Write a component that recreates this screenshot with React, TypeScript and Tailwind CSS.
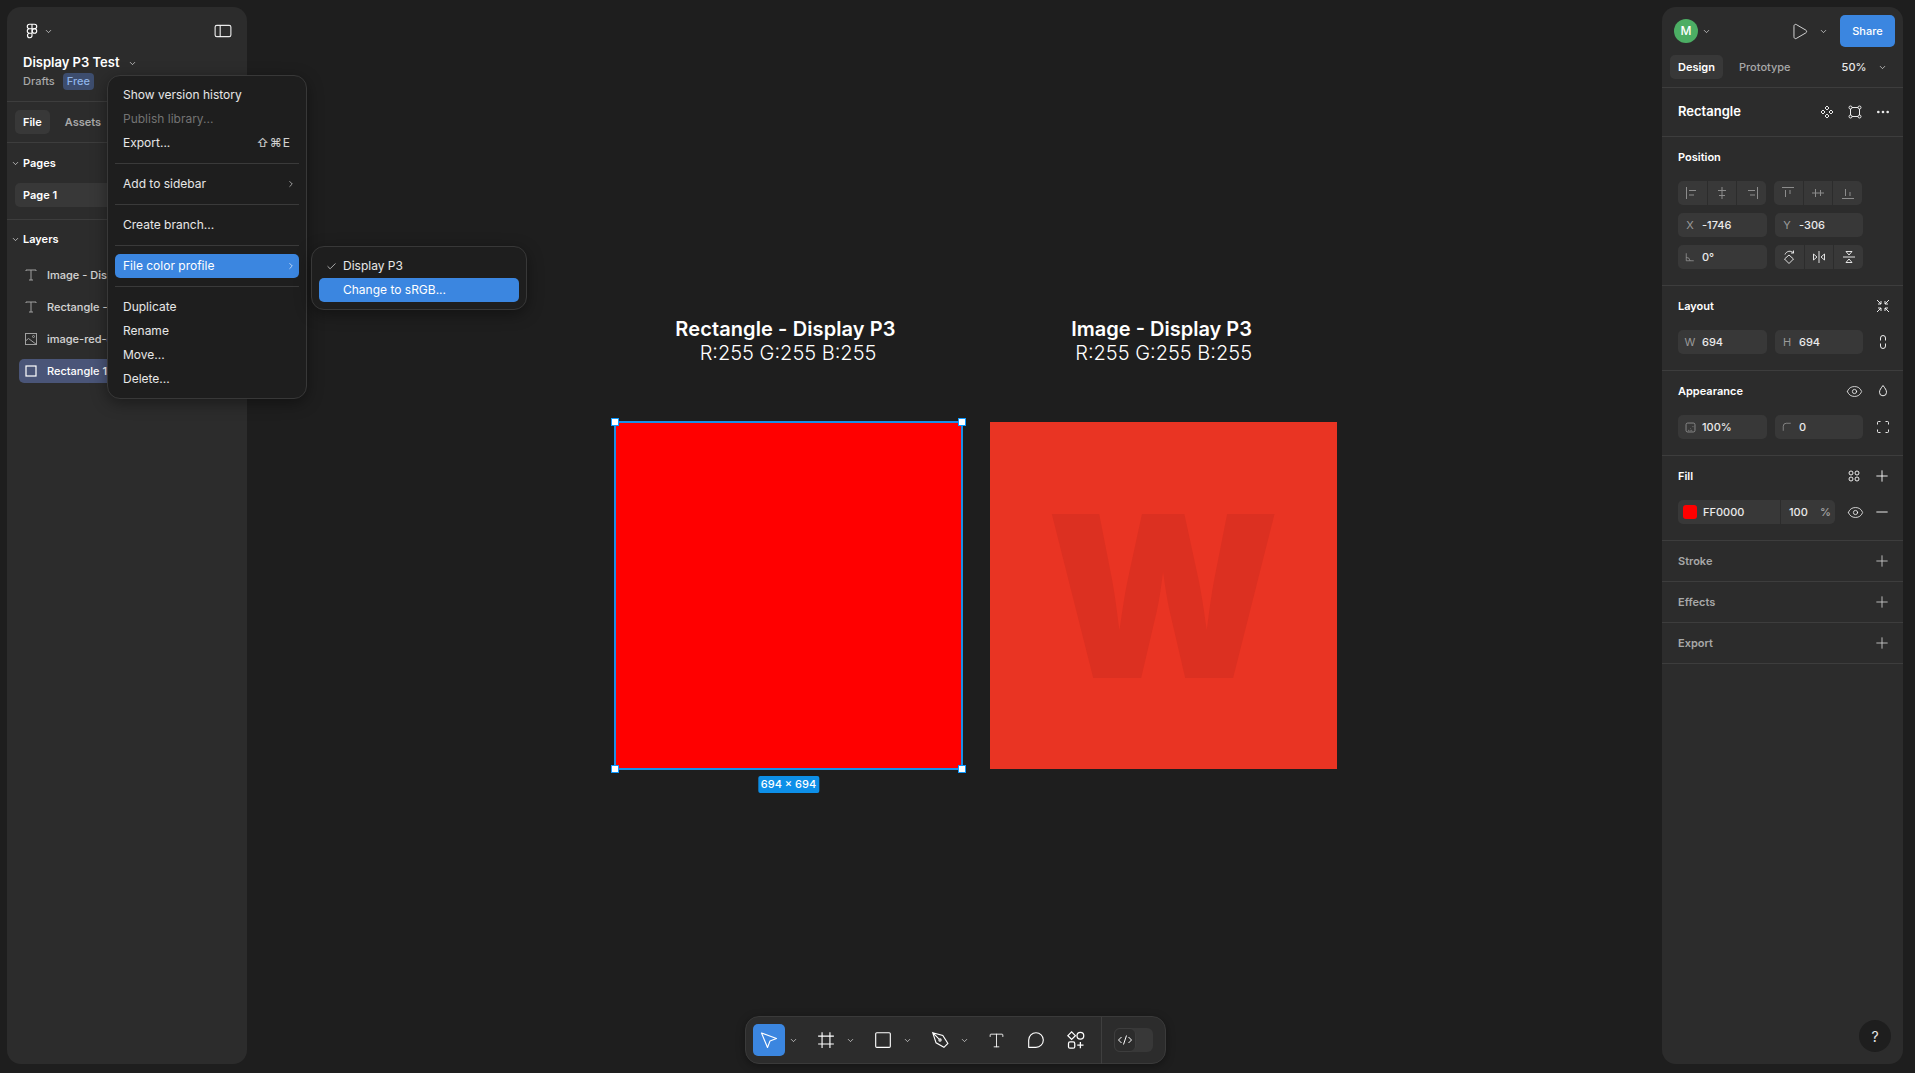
import type { ReactNode } from 'react';
import { Check, ChevronDown, ChevronRight, Ellipsis, Eye, Minus, Play, Plus, Type } from 'lucide-react';

const font = "font-['Inter','Noto_Sans',sans-serif]";

function Svg({ size = 16, children, className = '' }: { size?: number; children: ReactNode; className?: string }) {
  return (
    <svg width={size} height={size} viewBox="0 0 16 16" fill="none" stroke="currentColor" strokeWidth="1" className={`shrink-0 ${className}`}>
      {children}
    </svg>
  );
}

function Chevron({ className = 'text-white/80' }: { className?: string }) {
  return <ChevronDown size={9} strokeWidth={2} className={`shrink-0 ${className}`} />;
}

function Field({ label, value, className = 'w-[89px]' }: { label: ReactNode; value: string; className?: string }) {
  return (
    <div className={`flex h-6 shrink-0 items-center rounded-[5px] bg-[#383838] ${className}`}>
      <span className="flex w-[24px] shrink-0 items-center justify-center text-[#9a9a9a]">{label}</span>
      <span className="text-[11px] font-medium text-white/90">{value}</span>
    </div>
  );
}

function SegGroup({ icons }: { icons: ReactNode[] }) {
  return (
    <div className="flex h-6 w-[88px] shrink-0 items-center gap-px overflow-hidden rounded-[5px]">
      {icons.map((icon, i) => (
        <span key={i} className="flex h-6 flex-1 items-center justify-center bg-[#383838]">
          {icon}
        </span>
      ))}
    </div>
  );
}

function SectionTitle({ title, muted, right }: { title: string; muted?: boolean; right?: ReactNode }) {
  return (
    <div className="flex h-6 items-center justify-between">
      <span className={`text-[11px] font-semibold ${muted ? 'text-[#a8a8a8]' : 'text-white'}`}>{title}</span>
      {right}
    </div>
  );
}

function MenuItem({ label, active, disabled, right }: { label: string; active?: boolean; disabled?: boolean; right?: ReactNode }) {
  return (
    <div
      className={`flex h-6 items-center justify-between rounded-[5px] pl-2 pr-[3px] text-[12px] ${
        active ? 'bg-[#3b86e0] text-white' : disabled ? 'text-[#737373]' : 'text-white/90'
      }`}
    >
      <span>{label}</span>
      {right}
    </div>
  );
}

function MenuDivider() {
  return <div className="my-2 h-px bg-[#3a3a3a]" />;
}

function LayerRow({ icon, label, selected }: { icon: ReactNode; label: string; selected?: boolean }) {
  return (
    <div className={`flex h-6 items-center gap-2 whitespace-nowrap rounded-[5px] pl-1 ${selected ? 'bg-[#4a5578] text-white' : 'text-white/80'}`}>
      <span className={selected ? 'text-white' : 'text-[#a0a0a0]'}>{icon}</span>
      <span className="text-[11px] font-medium">{label}</span>
    </div>
  );
}

const TextIcon = (
  <Svg>
    <path d="M3 4V3h10v1M8 3v10M6 13h4" />
  </Svg>
);

function LeftPanel() {
  return (
    <aside className="flex h-full w-[240px] flex-col overflow-hidden rounded-[14px] bg-[#2c2c2c]">
      <div className="border-b border-[#3d3d3d] px-4 pb-[11px] pt-3">
        <div className="flex h-6 items-center justify-between">
          <div className="flex items-center gap-[3px] text-white">
            <Svg size={18} className="text-white">
              <path d="M8 2H5.8a2 2 0 0 0 0 4H8zM8 6H5.8a2 2 0 0 0 0 4H8zM8 10H5.8a2 2 0 1 0 2.2 2zM8 2h2.2a2 2 0 0 1 0 4H8z" />
              <circle cx="10.2" cy="8" r="2" />
            </Svg>
            <Chevron />
          </div>
          <Svg size={18} className="-mr-px text-white/90">
            <rect x="1" y="3" width="14" height="10" rx="1.5" />
            <path d="M5.5 3v10" />
          </Svg>
        </div>
        <div className="mt-2 flex h-6 items-center gap-2">
          <span className="text-[13px] font-semibold text-white">Display P3 Test</span>
          <Chevron />
        </div>
        <div className="-mt-[2px] flex h-[17px] items-center gap-2 text-[11px] font-medium">
          <span className="text-[#a8a8a8]">Drafts</span>
          <span className="rounded-[4px] bg-[#3d4d6e] px-1 text-[#8fb4e8]">Free</span>
        </div>
      </div>

      <div className="flex h-[41px] items-center gap-[15px] border-b border-[#3d3d3d] pl-2 text-[11px] font-semibold">
        <span className="flex h-6 items-center rounded-[5px] bg-[#383838] px-2 text-white">File</span>
        <span className="text-[#a8a8a8]">Assets</span>
      </div>

      <div className="border-b border-[#3d3d3d] px-2 pb-3 pt-2">
        <div className="-ml-1 flex h-6 items-center gap-[3px]">
          <Chevron />
          <span className="text-[11px] font-semibold text-white">Pages</span>
        </div>
        <div className="mt-2 flex h-6 items-center rounded-[5px] bg-[#383838] pl-2 text-[11px] font-semibold text-white">Page 1</div>
      </div>

      <div className="px-2 pt-[7px]">
        <div className="-ml-1 flex h-6 items-center gap-[3px]">
          <Chevron />
          <span className="text-[11px] font-semibold text-white">Layers</span>
        </div>
        <div className="mt-3 flex flex-col gap-2 pl-1">
          <LayerRow icon={TextIcon} label="Image - Display P3" />
          <LayerRow icon={TextIcon} label="Rectangle - Display P3" />
          <LayerRow
            label="image-red-display-p3"
            icon={
              <Svg>
                <rect x="2.5" y="2.5" width="11" height="11" />
                <circle cx="10.5" cy="5.5" r="1" />
                <path d="M2.5 10l3-2.5 8 6" />
              </Svg>
            }
          />
          <LayerRow
            selected
            label="Rectangle 1"
            icon={
              <Svg>
                <rect x="3" y="3" width="10" height="10" strokeWidth="1.2" />
              </Svg>
            }
          />
        </div>
      </div>
    </aside>
  );
}

const AlignIcons = {
  left: <path d="M2.5 2v12M5 5.5h7M5 10h5" />,
  hcenter: <path d="M8 2v12M4 5.5h8M5 10.5h6" />,
  right: <path d="M13.5 2v12M4 5.5h7M6 10h5" />,
  top: <path d="M2 2.5h12M5.5 5v7M10 5v4" />,
  vcenter: <path d="M2 8h12M5.5 4v8M10.5 5v6" />,
  bottom: <path d="M2 13.5h12M5.5 4v7M10 7v4" />,
};

const EyeIcon = <Eye size={17} strokeWidth={1.2} className="text-white/90" />;
const PlusIcon = (muted?: boolean) => <Plus size={18} strokeWidth={1.2} className={muted ? 'text-[#c8c8c8]' : 'text-white'} />;

function RightPanel() {
  const seg = (d: ReactNode) => <Svg className="text-[#8c8c8c]">{d}</Svg>;
  return (
    <aside className="relative flex h-full w-[241px] flex-col overflow-hidden rounded-[14px] bg-[#2c2c2c]">
      <div className="border-b border-[#3d3d3d] px-2 pb-2 pt-2">
        <div className="flex h-8 items-center">
          <span className="ml-[4px] flex h-6 w-6 items-center justify-center rounded-full bg-[#4cae64] text-[12px] font-medium text-white">M</span>
          <Chevron className="ml-[4px] text-white/80" />
          <Play size={19} strokeWidth={1} className="ml-[79px] text-white" />
          <Chevron className="ml-[10px] text-white/80" />
          <span className="ml-[12px] flex h-8 w-[55px] items-center justify-center rounded-[5px] bg-[#3b86e0] text-[11px] font-medium text-white">Share</span>
        </div>
        <div className="mt-2 flex h-6 items-center text-[11px] font-semibold">
          <span className="flex h-6 w-[53px] items-center justify-center rounded-[5px] bg-[#383838] text-white">Design</span>
          <span className="ml-4 font-medium text-[#a8a8a8]">Prototype</span>
          <span className="ml-[51px] font-medium text-white/90">50%</span>
          <Chevron className="ml-[12px] text-white/80" />
        </div>
      </div>

      <div className="flex h-[49px] items-center justify-between border-b border-[#3d3d3d] pl-4 pr-[12px]">
        <span className="text-[13px] font-semibold text-white">Rectangle</span>
        <div className="flex items-center gap-[12px] text-white/90">
          <Svg>
            <path d="M8 2l2 2-2 2-2-2zM8 10l2 2-2 2-2-2zM4 6l2 2-2 2-2-2zM12 6l2 2-2 2-2-2z" />
          </Svg>
          <Svg>
            <rect x="3.5" y="3.5" width="9" height="9" />
            <rect x="2" y="2" width="3" height="3" rx="1.5" fill="#2c2c2c" />
            <rect x="11" y="2" width="3" height="3" rx="1.5" fill="#2c2c2c" />
            <rect x="2" y="11" width="3" height="3" rx="1.5" fill="#2c2c2c" />
            <rect x="11" y="11" width="3" height="3" rx="1.5" fill="#2c2c2c" />
          </Svg>
          <Ellipsis size={16} strokeWidth={2} />
        </div>
      </div>

      <section className="border-b border-[#3d3d3d] px-4 pb-4 pt-2">
        <SectionTitle title="Position" />
        <div className="mt-3 flex flex-col gap-2">
          <div className="flex gap-2">
            <SegGroup icons={[seg(AlignIcons.left), seg(AlignIcons.hcenter), seg(AlignIcons.right)]} />
            <SegGroup icons={[seg(AlignIcons.top), seg(AlignIcons.vcenter), seg(AlignIcons.bottom)]} />
          </div>
          <div className="flex gap-2">
            <Field label={<span className="text-[11px]">X</span>} value="-1746" />
            <Field label={<span className="text-[11px]">Y</span>} value="-306" className="w-[88px]" />
          </div>
          <div className="flex gap-2">
            <Field
              label={
                <Svg size={12}>
                  <path d="M3 3v10h10M3 8.5a5 5 0 0 1 5 4.5" />
                </Svg>
              }
              value="0°"
            />
            <SegGroup
              icons={[
                <Svg key="r" className="text-white/85">
                  <path d="M8 6l4.5 4L8 14.5 3.5 10zM4 5.500A5 5 0 0 1 12.500 4M12.500 1.500V4H10" />
                </Svg>,
                <Svg key="f" className="text-white/85">
                  <path d="M8 2v12M2.500 5v6L6 8zM13.500 5v6L10 8z" />
                </Svg>,
                <Svg key="v" className="text-white/85">
                  <path d="M2 8h12M5 2.500h6L8 6zM5 13.500h6L8 10z" />
                </Svg>,
              ]}
            />
          </div>
        </div>
      </section>

      <section className="border-b border-[#3d3d3d] px-4 pb-4 pt-2">
        <SectionTitle
          title="Layout"
          right={
            <Svg className="-mr-1 text-white/90">
              <path d="M2 2l4 4M6 3v3H3M14 2l-4 4M10 3v3h3M2 14l4-4M6 13v-3H3M14 14l-4-4M10 13v-3h3" />
            </Svg>
          }
        />
        <div className="mt-3 flex items-center gap-2">
          <Field label={<span className="text-[11px]">W</span>} value="694" />
          <Field label={<span className="text-[11px]">H</span>} value="694" className="w-[88px]" />
          <Svg className="ml-1 text-white/90">
            <path d="M5.500 6.500V4a2.500 2.500 0 0 1 5 0v2.500M5.500 9.500V12a2.500 2.500 0 0 0 5 0V9.500" />
          </Svg>
        </div>
      </section>

      <section className="border-b border-[#3d3d3d] px-4 pb-4 pt-2">
        <SectionTitle
          title="Appearance"
          right={
            <div className="-mr-1 flex items-center gap-3 text-white/90">
              {EyeIcon}
              <Svg>
                <path d="M8 2.500c2 2.600 3.500 4.600 3.500 6.800a3.500 3.500 0 0 1-7 0C4.500 7.100 6 5.100 8 2.500z" />
              </Svg>
            </div>
          }
        />
        <div className="mt-3 flex items-center gap-2">
          <Field
            value="100%"
            label={
              <Svg size={13}>
                <rect x="2.500" y="2.500" width="11" height="11" rx="2" />
                <path d="M5 11.500h6M8 9v.5M11 6.500v2" strokeDasharray="1 1" />
              </Svg>
            }
          />
          <Field
            value="0"
            className="w-[88px]"
            label={
              <Svg size={12}>
                <path d="M3 13V7a4 4 0 0 1 4-4h6" />
              </Svg>
            }
          />
          <Svg className="ml-1 text-white/90">
            <path d="M2.500 5.500v-2a1 1 0 0 1 1-1h2M10.500 2.500h2a1 1 0 0 1 1 1v2M13.500 10.500v2a1 1 0 0 1-1 1h-2M5.500 13.500h-2a1 1 0 0 1-1-1v-2" />
          </Svg>
        </div>
      </section>

      <section className="border-b border-[#3d3d3d] px-4 pb-4 pt-2">
        <SectionTitle
          title="Fill"
          right={
            <div className="-mr-1 flex items-center gap-[11px] text-white/90">
              <Svg>
                <circle cx="5" cy="5" r="2" />
                <circle cx="11" cy="5" r="2" />
                <circle cx="5" cy="11" r="2" />
                <circle cx="11" cy="11" r="2" />
              </Svg>
              {PlusIcon()}
            </div>
          }
        />
        <div className="mt-3 flex items-center">
          <div className="flex h-6 w-[157px] shrink-0 items-center rounded-[5px] bg-[#383838] text-[11px] font-medium text-white/90">
            <span className="ml-[5px] h-[14px] w-[14px] rounded-[3px] bg-[#ff0000]" />
            <span className="ml-[6px] w-[77px]">FF0000</span>
            <span className="h-6 w-px bg-[#2c2c2c]" />
            <span className="ml-2 w-[31px]">100</span>
            <span className="text-[#a8a8a8]">%</span>
          </div>
          <span className="ml-3">{EyeIcon}</span>
          <Minus size={18} strokeWidth={1.2} className="ml-[9px] shrink-0 text-white" />
        </div>
      </section>

      {['Stroke', 'Effects', 'Export'].map(t => (
        <div key={t} className="flex h-[41px] items-center justify-between border-b border-[#3d3d3d] pl-4 pr-3">
          <span className="text-[11px] font-semibold text-[#a8a8a8]">{t}</span>
          {PlusIcon(true)}
        </div>
      ))}

      <span className="absolute bottom-[12px] right-[12px] flex h-8 w-8 items-center justify-center rounded-full bg-[#1e1e1e] text-[14px] text-white/90">?</span>
    </aside>
  );
}

function Toolbar() {
  return (
    <div className="absolute left-[745px] top-[1016px] flex h-[48px] w-[421px] items-center rounded-[14px] border border-[#3a3a3a] bg-[#2c2c2c] pl-[7px] text-white shadow-[0_2px_8px_rgba(0,0,0,0.35)]">
      <span className="flex h-8 w-8 items-center justify-center rounded-[5px] bg-[#3b86e0]">
        <svg width="20" height="20" viewBox="0 0 20 20" fill="none" stroke="currentColor" strokeWidth="1.1" strokeLinejoin="round">
          <path d="M2.500 3l15 5.500-6.500 2.500L8.500 17.500z" />
        </svg>
      </span>
      <span className="flex w-4 justify-center"><Chevron /></span>
      <span className="ml-[9px] flex h-8 w-8 items-center justify-center">
        <Svg size={18}>
          <path d="M4.500 1v14M11.500 1v14M1 4.500h14M1 11.500h14" />
        </Svg>
      </span>
      <span className="flex w-4 justify-center"><Chevron /></span>
      <span className="ml-[9px] flex h-8 w-8 items-center justify-center">
        <Svg size={18}>
          <rect x="1.500" y="1.500" width="13" height="13" rx="1" />
        </Svg>
      </span>
      <span className="flex w-4 justify-center"><Chevron /></span>
      <span className="ml-[9px] flex h-8 w-8 items-center justify-center">
        <Svg size={18}>
          <path d="M1.500 1.500l9 2.500 4.500 7-3.500 3.500-7-4zM1.500 1.500l5.500 5.500" />
          <circle cx="8" cy="8" r="1" />
        </Svg>
      </span>
      <span className="flex w-4 justify-center"><Chevron /></span>
      <span className="ml-[8px] flex h-8 w-8 items-center justify-center">
        <Type size={19} strokeWidth={1.1} />
      </span>
      <span className="ml-2 flex h-8 w-8 items-center justify-center">
        <Svg size={18}>
          <path d="M1.500 14.500V8A6.500 6.500 0 1 1 8 14.500z" strokeLinejoin="round" />
        </Svg>
      </span>
      <span className="ml-2 flex h-8 w-8 items-center justify-center">
        <Svg size={20}>
          <path d="M4.500 1.500L7.500 4.500 4.500 7.500 1.500 4.500z" />
          <circle cx="11.500" cy="4.500" r="2.700" />
          <rect x="2" y="9.500" width="5" height="5" rx="1.200" />
          <path d="M11.500 9.500v5M9 12h5" />
        </Svg>
      </span>
      <span className="ml-[9px] h-[47px] w-px bg-[#3f3f3f]" />
      <div className="ml-[12px] h-6 w-[39px] rounded-[6px] bg-[#383838]">
        <span className="flex h-6 w-[22px] items-center justify-center rounded-[6px] border border-[#3d3d3d] bg-[#2c2c2c]">
          <svg width="16" height="12" viewBox="0 0 16 12" fill="none" stroke="currentColor" strokeWidth="1">
            <path d="M4.500 3L1.500 6l3 3M11.500 3l3 3-3 3M9.500 1.500l-3 9" />
          </svg>
        </span>
      </div>
    </div>
  );
}

function Handle({ className }: { className: string }) {
  return <span className={`absolute h-[8px] w-[8px] border border-[#0d99ff] bg-white ${className}`} />;
}

function Canvas() {
  return (
    <>
      <div className="absolute left-[598px] top-[317px] w-[380px] text-center text-[20px] leading-[24px] text-white">
        <div className="pr-[5px] font-semibold tracking-[0.1px]">Rectangle - Display P3</div>
        <div className="font-light">R:255 G:255 B:255</div>
      </div>
      <div className="absolute left-[1000px] top-[317px] w-[252px] text-right text-[20px] leading-[24px] text-white">
        <div className="font-semibold">Image - Display P3</div>
        <div className="font-light">R:255 G:255 B:255</div>
      </div>

      <div className="absolute left-[614px] top-[421px] h-[349px] w-[349px] border-2 border-[#1a8fe6] bg-[#ff0000]">
        <Handle className="-left-[5px] -top-[5px]" />
        <Handle className="-right-[5px] -top-[5px]" />
        <Handle className="-bottom-[5px] -left-[5px]" />
        <Handle className="-bottom-[5px] -right-[5px]" />
        <span className="absolute -bottom-[25px] left-1/2 -translate-x-1/2 whitespace-nowrap rounded-[2px] bg-[#0d8fe8] px-[3px] text-[11px] font-medium leading-[17px] text-white">694 × 694</span>
      </div>

      <div className="absolute left-[990px] top-[422px] flex h-[347px] w-[347px] items-center justify-center overflow-hidden bg-[#e93423]">
        <span className="scale-x-[0.95] font-['Inter',sans-serif] text-[226px] font-black leading-none text-[#dc3021]">W</span>
      </div>
    </>
  );
}

function FileMenu() {
  return (
    <>
      <div className="absolute left-[107px] top-[75px] w-[200px] rounded-[13px] border border-[#383838] bg-[#1e1e1e] px-[7px] py-[7px] shadow-[0_4px_16px_rgba(0,0,0,0.4)]">
        <MenuItem label="Show version history" />
        <MenuItem label="Publish library..." disabled />
        <MenuItem label="Export..." right={<span className="pr-[5px] text-[12px] tracking-[1px] text-white/80">⇧⌘E</span>} />
        <MenuDivider />
        <MenuItem label="Add to sidebar" right={<ChevronRight size={10} strokeWidth={1.5} />} />
        <MenuDivider />
        <MenuItem label="Create branch..." />
        <MenuDivider />
        <MenuItem label="File color profile" active right={<ChevronRight size={10} strokeWidth={1.5} />} />
        <MenuDivider />
        <MenuItem label="Duplicate" />
        <MenuItem label="Rename" />
        <MenuItem label="Move..." />
        <MenuItem label="Delete..." />
      </div>

      <div className="absolute left-[311px] top-[246px] w-[216px] rounded-[13px] border border-[#383838] bg-[#1e1e1e] p-[7px] text-[12px] text-white/90 shadow-[0_4px_16px_rgba(0,0,0,0.4)]">
        <div className="flex h-6 items-center pl-[7px]">
          <Check size={11} strokeWidth={1.5} />
          <span className="ml-[6px]">Display P3</span>
        </div>
        <div className="flex h-6 items-center rounded-[5px] bg-[#3b86e0] pl-[24px] text-white">Change to sRGB...</div>
      </div>
    </>
  );
}

export default function App() {
  return (
    <div className={`relative flex h-screen w-screen justify-between overflow-hidden bg-[#1e1e1e] p-[7px] pb-[9px] pr-[12px] antialiased ${font}`}>
      <LeftPanel />
      <Canvas />
      <RightPanel />
      <Toolbar />
      <FileMenu />
    </div>
  );
}
